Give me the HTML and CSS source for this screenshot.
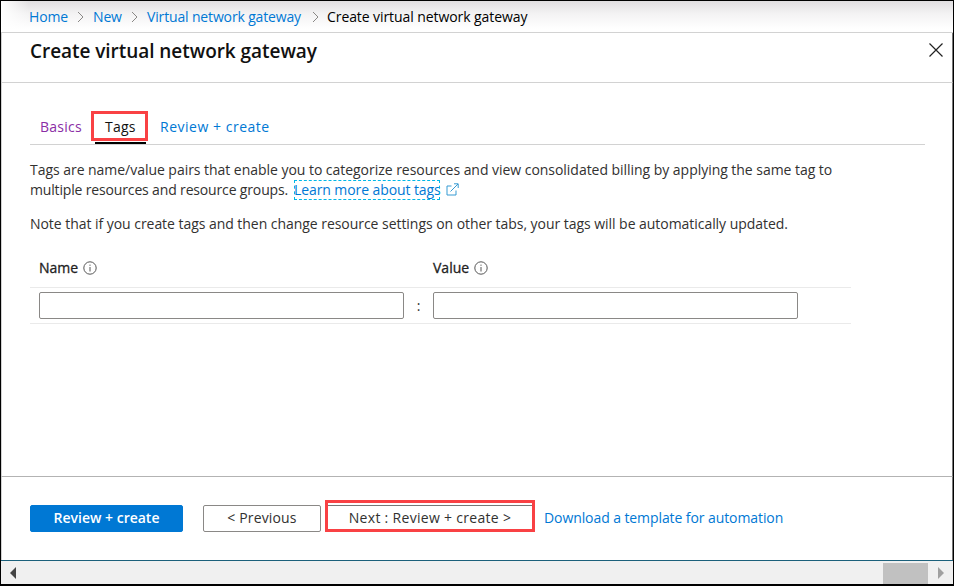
FILE: index.html
```html
<!DOCTYPE html>
<html lang="en">
<head>
<meta charset="utf-8">
<title>Create virtual network gateway</title>
<link rel="stylesheet" href="styles.css">
</head>
<body>
<div class="window">
  <nav class="crumbs">
    <a class="c-home">Home</a>
    <svg class="chev" viewBox="0 0 7 12"><path d="M1 1l5 5-5 5"/></svg>
    <a class="c-new">New</a>
    <svg class="chev" viewBox="0 0 7 12"><path d="M1 1l5 5-5 5"/></svg>
    <a class="c-vng">Virtual network gateway</a>
    <svg class="chev" viewBox="0 0 7 12"><path d="M1 1l5 5-5 5"/></svg>
    <span class="c-current">Create virtual network gateway</span>
  </nav>
  <header class="header">
    <h1>Create virtual network gateway</h1>
    <svg class="close" viewBox="0 0 14 14"><path d="M.5.5l13 13M13.5.5l-13 13"/></svg>
  </header>
  <main class="content">
    <div class="tabs">
      <a class="tab visited">Basics</a>
      <a class="tab active">Tags</a>
      <a class="tab last">Review + create</a>
    </div>
    <p class="intro"><span class="line l1">Tags are name/value pairs that enable you to categorize resources and view consolidated billing by applying the same tag to</span><span class="line"><span class="l2">multiple resources and resource groups.</span><a class="learn">Learn more about tags</a><svg class="ext" viewBox="0 0 13 13"><path d="M5.5 3H1v9h9V7.500M4.500 8.500l7.500-7.500M8 .8h4.200V5"/></svg></span></p>
    <p class="note">Note that if you create tags and then change resource settings on other tabs, your tags will be automatically updated.</p>
    <div class="grid">
      <div class="row head">
        <div class="cell"><span class="l-name">Name</span><svg class="info" viewBox="0 0 14 14"><circle cx="7" cy="7" r="6.200"/><path d="M7 6v4.500M7 3.600v1.200"/></svg></div>
        <span class="sep"></span>
        <div class="cell"><span class="l-value">Value</span><svg class="info" viewBox="0 0 14 14"><circle cx="7" cy="7" r="6.200"/><path d="M7 6v4.500M7 3.600v1.200"/></svg></div>
      </div>
      <div class="row fields">
        <input class="cell" type="text" aria-label="Name">
        <span class="sep">:</span>
        <input class="cell" type="text" aria-label="Value">
      </div>
    </div>
  </main>
  <footer class="footer">
    <button class="btn primary"><span>Review + create</span></button>
    <button class="btn previous"><span>&lt; Previous</span></button>
    <button class="btn next"><span>Next : Review + create &gt;</span></button>
    <a class="download">Download a template for automation</a>
  </footer>
  <div class="scrollbar">
    <svg class="arrow" viewBox="0 0 6 12"><path d="M6 0v12L0 6z"/></svg>
    <div class="thumb"></div>
    <svg class="arrow off" viewBox="0 0 6 12"><path d="M0 0v12l6-6z"/></svg>
  </div>
</div>
</body>
</html>
```
FILE: styles.css
```css
* { box-sizing: border-box; }
body { margin: 0; background: #fff; font: 14px/20px "Open Sans", sans-serif; color: #323130; }
a { color: #0078d4; text-decoration: none; }
h1, p { margin: 0; }
svg { fill: none; flex: none; }
a, span, h1 { white-space: nowrap; }
.window { width: 954px; height: 586px; border: 1px solid #000; border-bottom-width: 2px; display: flex; flex-direction: column; overflow: hidden; }
.crumbs { height: 32px; flex: none; display: flex; align-items: center; padding-left: 28px; border-bottom: 1px solid #d2d2d2; background: linear-gradient(90deg, #fff, transparent 28px), linear-gradient(#e0dee0, #f3f2f3 40%, #fff 90%); }
.crumbs a, .crumbs span { letter-spacing: -.15px; }
.c-home { width: 39px; }
.c-new { width: 29px; }
.c-vng { width: 156px; }
.crumbs .c-current { color: #000; margin-left: -1px; letter-spacing: -.08px; }
.chev { width: 7px; height: 12px; stroke: #8a8886; margin: 0 9px; }
.header { height: 50px; flex: none; display: flex; justify-content: space-between; padding: 7px 9px 0 28px; border-left: 1px solid #d2d2d2; border-right: 1px solid #777; border-bottom: 1px solid #d2d2d2; }
h1 { font-size: 19px; line-height: 22px; font-weight: 600; color: #111; letter-spacing: -.05px; }
.close { width: 14px; height: 14px; margin-top: 3px; stroke: #222; stroke-width: 1.200; }
.content { flex: 1; padding: 28px 0 0 28px; border-left: 1px solid #d2d2d2; border-right: 1px solid #777; }
.tabs { width: 895px; height: 34px; border-bottom: 1px solid #d2d2d2; display: flex; }
.tab { line-height: 32px; letter-spacing: .25px; }
.tab.last { letter-spacing: .52px; }
.tab.visited { color: #8a2da5; width: 51px; margin-left: 10px; }
.tab.active { position: relative; width: 57px; height: 30px; line-height: 26px; border: 3px solid #f94144; color: #111; padding-left: 11px; margin-right: 12px; }
.tab.active::after { content: ""; position: absolute; left: 1px; top: 28px; width: 51px; height: 2px; background: #000; }
.intro { margin-top: 15px; }
.line { display: flex; height: 20px; align-items: center; }
.l1 { letter-spacing: -.037px; }
.l2 { width: 258px; letter-spacing: -.155px; }
.learn { margin-left: 6px; width: 146px; height: 20px; line-height: 19px; letter-spacing: -.09px; outline: 1px dashed #00b7e8; outline-offset: -1px; }
.ext { width: 13px; height: 13px; margin: -1px 0 0 6px; stroke: #379bd3; }
.note { margin-top: 14px; white-space: nowrap; letter-spacing: -.044px; }
.grid { width: 821px; margin-top: 14px; }
.row { display: flex; align-items: center; border-bottom: 1px solid #eaeaea; padding-left: 9px; }
.head { height: 40px; color: #222; }
.head .cell { display: flex; align-items: center; gap: 5px; -webkit-text-stroke: .3px #222; }
.fields { height: 36px; }
.cell { width: 365px; flex: none; }
input.cell { height: 27px; border: 1px solid #8a8886; border-radius: 2px; padding: 0; background: #fff; }
.sep { width: 29px; text-align: center; }
.info { width: 14px; height: 14px; stroke: #555; }
.footer { height: 84px; flex: none; border-top: 1px solid #b3b3b3; border-left: 1px solid #d2d2d2; border-right: 1px solid #777; display: flex; align-items: flex-start; padding: 28px 0 0 28px; }
.btn { height: 27px; font: 14px/20px "Open Sans", sans-serif; padding: 0 0 2px; border: 1px solid #8a8886; border-radius: 2px; background: #fff; color: #323130; letter-spacing: .15px; }
.btn.primary { width: 153px; background: #0078d4; border-color: #0078d4; color: #fff; font-weight: 600; margin-right: 20px; letter-spacing: 0; }
.previous { width: 118px; margin-right: 4px; }
.btn.next { width: 210px; height: 32px; margin-top: -5px; border: 3px solid #f94144; border-radius: 0; box-shadow: inset 0 2px #fff, inset 0 3px #777; margin-right: 9px; padding: 3px 0 0; letter-spacing: .3px; }
.download { line-height: 25px; letter-spacing: -.085px; }
.scrollbar { height: 24px; flex: none; border-top: 1px solid #1b607b; background: #f0f0f0; display: flex; align-items: center; padding: 0 9px; }
.arrow { width: 6px; height: 12px; fill: #444; }
.arrow.off { fill: #a0a0a0; }
.thumb { width: 45px; height: 21px; background: #c1c1c1; margin: 2px 10px 0 auto; }
```
